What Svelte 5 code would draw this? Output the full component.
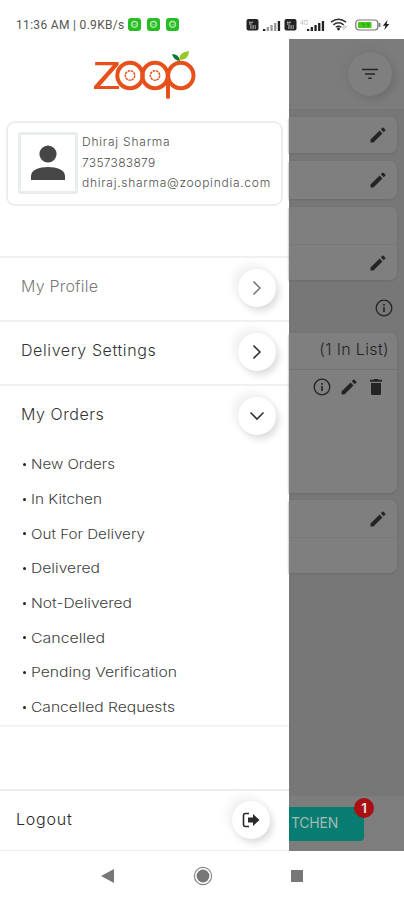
<script>
  const MENU = [
    { label: 'My Profile', muted: true, open: false },
    { label: 'Delivery Settings', muted: false, open: false },
    { label: 'My Orders', muted: false, open: true },
  ];

  const ORDER_LINKS = [
    { label: 'New Orders', width: 84 },
    { label: 'In Kitchen', width: 71 },
    { label: 'Out For Delivery', width: 114 },
    { label: 'Delivered', width: 69 },
    { label: 'Not-Delivered', width: 101 },
    { label: 'Cancelled', width: 74 },
    { label: 'Pending Verification', width: 146 },
    { label: 'Cancelled Requests', width: 144 },
  ];

  const user = {
    name: 'Dhiraj Sharma',
    phone: '7357383879',
    email: 'dhiraj.sharma@zoopindia.com',
  };

  const BARS = [2, 4, 6, 8, 10];
</script>

{#snippet pencil()}
  <svg class="icon" viewBox="0 0 24 24" width="20" height="20">
    <path d="M3 17.5V21h3.5L17.4 10.1l-3.5-3.5zM20.7 6.8a1 1 0 0 0 0-1.4l-2.1-2.1a1 1 0 0 0-1.4 0l-1.9 1.9 3.5 3.5z" />
  </svg>
{/snippet}

{#snippet info()}
  <svg class="icon" viewBox="0 0 20 20" width="20" height="20">
    <circle cx="10" cy="10" r="7.8" fill="none" stroke="currentColor" stroke-width="1.3" />
    <path d="M9.2 9h1.6v5H9.2zM9.2 6h1.6v1.7H9.2z" />
  </svg>
{/snippet}

{#snippet signal(faded)}
  <svg viewBox="0 0 19 12" width="19" height="12">
    {#each BARS as h, i}
      <rect x={1 + i * 3.7} y={12 - h} width="2.3" height={h} fill={i > 0 && i < 4 && faded ? '#999' : '#222'} />
    {/each}
  </svg>
{/snippet}

{#snippet volte()}
  <svg viewBox="0 0 13 12" width="13" height="12">
    <rect x=".5" width="12" height="11.5" rx="2" fill="#222" />
    <path d="M3 3.2h4M3 5h3M4 7h6M4 9h6" stroke="#ddd" stroke-width="1.1" stroke-dasharray="1.7 .6" fill="none" />
  </svg>
{/snippet}

<div class="phone">
  <div class="statusbar">
    <span class="clock">11:36 AM | 0.9KB/s</span>
    <div class="chats">
      {#each [1, 2, 3] as _}
        <svg viewBox="0 0 13 13" width="13" height="13">
          <rect width="13" height="13" rx="3" fill="#27bd24" />
          <circle cx="6.5" cy="6.3" r="3.2" fill="#6dd568" stroke="#b6efb2" />
          <path d="M5 5.5h3M5 7.3h3" stroke="#27a824" stroke-width=".8" />
        </svg>
      {/each}
    </div>
    <div class="radios">
      {@render volte()}
      {@render signal(true)}
      {@render volte()}
      <div class="sim">
        <span>4G</span>
        {@render signal(false)}
      </div>
      <svg class="wifi" viewBox="0 0 18 13" width="18" height="13">
        <path d="M1 4.2q7.5-6 15 0M3.3 6.8q5.2-4 10.4 0M5.8 9.2q2.7-2 5.4 0" fill="none" stroke="#333" stroke-width="1.6" />
        <circle cx="8.5" cy="11" r="1.4" fill="#222" />
        <path d="M13 11.5l4-3.5M12 10l3-2.5" stroke="#aaa" />
      </svg>
      <svg class="battery" viewBox="0 0 35 12" width="35" height="12">
        <rect x=".8" y="1" width="22" height="10" rx="3" fill="#fff" stroke="#777" stroke-width="1.2" />
        <rect x="3" y="3" width="13.5" height="6" rx="1" fill="#42c71a" />
        <path d="M7 5h2v2.5M12 5h2l-1 2.5" fill="none" stroke="#258c0b" stroke-width=".8" />
        <path d="M24.5 4v4" stroke="#777" stroke-width="1.8" />
        <path d="M32.5 1l-4.7 5.8h2.6L29.3 11l5-6h-2.6z" fill="#222" />
      </svg>
    </div>
  </div>

  <div class="main">
    <aside class="drawer">
      <div class="brand">
        <svg viewBox="86 39 116 68" width="116" height="68">
          <text x="91.5" y="88.6" textLength="30" lengthAdjust="spacingAndGlyphs">z</text>
          <g fill="none" stroke="#e8501b" stroke-width="4">
            <circle cx="130" cy="75.5" r="12.7" />
            <circle cx="155" cy="75.5" r="12.7" />
            <circle cx="180.8" cy="75.5" r="12.7" />
            <path d="M168 77v20" stroke-linecap="round" />
          </g>
          <g fill="none" stroke="#e8501b" stroke-width="1.5" stroke-dasharray="2.5 .7">
            <circle cx="130" cy="75.5" r="4.7" />
            <circle cx="155" cy="75.5" r="4.7" />
          </g>
          <path d="M180 61q-6 0-8-7 7 0 8 7z" fill="#08783a" />
          <path d="M179 60q0-8 10-9 0 9-10 9z" fill="#96c928" />
        </svg>
      </div>

      <div class="profile">
        <div class="avatar">
          <svg viewBox="0 0 36 36" width="36" height="36">
            <circle cx="18" cy="9" r="8.6" />
            <path d="M1 35v-4c0-6 8-9 17-9s17 3 17 9v4z" />
          </svg>
        </div>
        <div class="details">
          <span class="name">{user.name}</span>
          <span class="tel">{user.phone}</span>
          <span class="email">{user.email}</span>
        </div>
      </div>

      <nav>
        {#each MENU as item}
          <div class="row" class:muted={item.muted} class:open={item.open}>
            <span>{item.label}</span>
            <button type="button" class="knob" aria-label={item.label}>
              <svg viewBox="0 0 16 16" width="16" height="16" class:down={item.open}>
                <path d="M4.5 1.5L11 8l-6.5 6.5" />
              </svg>
            </button>
          </div>
        {/each}
        <ul>
          {#each ORDER_LINKS as link}
            <li>
              <i></i>
              <svg height="24" width={link.width + 2}>
                <text x="0" y="17" textLength={link.width} lengthAdjust="spacingAndGlyphs">{link.label}</text>
              </svg>
            </li>
          {/each}
        </ul>
      </nav>

      <div class="logout">
        <span>Logout</span>
        <button type="button" class="knob" aria-label="Logout">
          <svg viewBox="0 0 20 16" width="20" height="16">
            <path d="M8 1.5H4.5Q2.5 1.5 2.5 3.5v9q0 2 2 2H8" />
            <path class="solid" d="M7 5.5h5V2l6.5 6-6.5 6v-3.5H7z" />
          </svg>
        </button>
      </div>
    </aside>

    <section class="page">
      <header>
        <div class="filter">
          <svg viewBox="0 0 16 12" width="16" height="12">
            <path d="M0 1.5h16M3 6h10M6.3 10.3h3.4" stroke="currentColor" stroke-width="1.6" />
          </svg>
        </div>
      </header>

      <div class="cards">
        <div class="card small">{@render pencil()}</div>
        <div class="card small second">{@render pencil()}</div>
        <div class="card split">
          <div class="top"></div>
          <div class="bottom">{@render pencil()}</div>
        </div>
        <div class="hint">{@render info()}</div>
        <div class="card list">
          <div class="count"><span>(1 In List)</span></div>
          <div class="tools">
            {@render info()}
            {@render pencil()}
            <svg class="icon" viewBox="0 0 20 20" width="20" height="20">
              <path d="M4 2.8h3.5L8.5 2h3l1 .8H16v2H4zM5 6h10v10.5Q15 18 13.5 18h-7Q5 18 5 16.5z" />
            </svg>
          </div>
        </div>
        <div class="card split last">
          <div class="top">{@render pencil()}</div>
          <div class="bottom"></div>
        </div>
      </div>

      <footer>
        <div class="kitchen">
          TCHEN
          <span class="badge">1</span>
        </div>
      </footer>
    </section>
  </div>

  <div class="softkeys">
    <svg viewBox="0 0 14 16" width="14" height="16"><path d="M0 8l13-7v14z" /></svg>
    <svg viewBox="0 0 20 20" width="20" height="20">
      <circle cx="10" cy="10" r="8.6" fill="none" stroke="#888" stroke-width="1.2" />
      <circle cx="10" cy="10" r="6.4" />
    </svg>
    <svg viewBox="0 0 14 14" width="14" height="14"><rect x="1" y="1" width="12" height="12" /></svg>
  </div>
</div>

<style>
  :global(body) {
    margin: 0;
    background: #fff;
  }

  .phone {
    width: 404px;
    height: 900px;
    display: flex;
    flex-direction: column;
    overflow: hidden;
    background: #fff;
    color: #333;
    font-family: Inter, 'Open Sans', sans-serif;
    font-weight: 300;
  }

  svg {
    display: block;
    flex-shrink: 0;
  }

  .statusbar {
    height: 39px;
    display: flex;
    align-items: center;
    box-sizing: border-box;
    padding: 10px 14px 0 16px;
  }

  .clock {
    width: 112px;
    font-family: Roboto, sans-serif;
    font-weight: 400;
    font-size: 12px;
    letter-spacing: 0.32px;
    white-space: nowrap;
    color: #555;
  }

  .chats {
    display: flex;
    gap: 6px;
  }

  .radios {
    display: flex;
    align-items: center;
    gap: 3px;
    margin-left: auto;
  }

  .sim {
    display: flex;
  }

  .sim span {
    width: 6px;
    font-size: 6px;
    color: #999;
  }

  .wifi {
    margin-left: 2px;
  }

  .battery {
    margin-left: 4px;
  }

  .main {
    height: 812px;
    display: flex;
  }

  .drawer {
    width: 289px;
    display: flex;
    flex-direction: column;
    background: #fff;
  }

  .brand {
    height: 82px;
    box-sizing: border-box;
    padding-left: 86px;
  }

  .brand svg {
    overflow: visible;
  }

  .brand text {
    font: 400 50px 'Open Sans', sans-serif;
    fill: #e8501b;
  }

  .profile {
    display: flex;
    box-sizing: border-box;
    height: 85px;
    margin: 0 6px 50px;
    padding: 9px 9px 9px 10px;
    border: 2px solid #eceeee;
    border-radius: 9px;
  }

  .avatar {
    width: 60px;
    height: 62px;
    box-sizing: border-box;
    display: flex;
    align-items: center;
    justify-content: center;
    border: 3px solid #e9eded;
    border-radius: 2px;
    fill: #464646;
  }

  .details {
    display: flex;
    flex-direction: column;
    margin-left: 4px;
    font-size: 12px;
    line-height: 20.5px;
    white-space: nowrap;
    color: #505050;
  }

  .name {
    letter-spacing: 0.78px;
  }

  .tel {
    letter-spacing: 0.3px;
  }

  .email {
    letter-spacing: 0.73px;
  }

  .row {
    height: 64px;
    box-sizing: border-box;
    display: flex;
    align-items: center;
    justify-content: space-between;
    padding: 0 13px 6px 21px;
    border-top: 2px solid #f0f0f0;
    font-size: 16px;
    letter-spacing: 0.6px;
    color: #333;
  }

  .row.muted {
    letter-spacing: 0.2px;
    color: #7a7a7a;
  }

  .row.open {
    height: 62px;
    padding-bottom: 5px;
    letter-spacing: 0.55px;
  }

  .knob {
    width: 38px;
    height: 38px;
    margin: 4px 0 0;
    padding: 0;
    display: flex;
    align-items: center;
    justify-content: center;
    border: 0;
    border-radius: 50%;
    background: #fff;
    color: inherit;
    box-shadow: 3px 4px 7px rgba(0, 0, 0, 0.14), -5px -5px 10px rgba(0, 0, 0, 0.06);
  }

  .knob path {
    fill: none;
    stroke: currentColor;
    stroke-width: 1.6;
  }

  .knob .solid {
    fill: currentColor;
    stroke: none;
  }

  .down {
    transform: rotate(90deg);
  }

  ul {
    height: 281px;
    box-sizing: border-box;
    margin: 0;
    padding: 1px 0 0 23px;
    list-style: none;
    border-bottom: 2px solid #f3f3f3;
  }

  li {
    height: 34.7px;
    display: flex;
    align-items: center;
    gap: 5px;
  }

  li i {
    width: 3px;
    height: 3px;
    border-radius: 50%;
    background: #222;
  }

  li text {
    font-size: 13px;
    fill: #404040;
  }

  .logout {
    height: 62px;
    box-sizing: border-box;
    display: flex;
    align-items: center;
    justify-content: space-between;
    margin-top: auto;
    padding: 0 19px 3px 16px;
    border-top: 2px solid #ececec;
    border-bottom: 1px solid #eee;
    font-size: 16px;
    letter-spacing: 0.8px;
    color: #2a2a2a;
  }

  .logout .knob {
    margin-top: 2px;
  }

  .page {
    width: 115px;
    display: flex;
    flex-direction: column;
    background: #777;
    color: #242424;
  }

  .page header {
    height: 71px;
    box-sizing: border-box;
    padding: 13px 0 0 59px;
    background: #7c7c7c;
    border-bottom: 1px solid #747474;
  }

  .filter {
    width: 44px;
    height: 44px;
    display: flex;
    align-items: center;
    justify-content: center;
    border-radius: 50%;
    background: #7f7f7f;
    box-shadow: 3px 3px 7px #6e6e6e, -3px -3px 7px #787878;
  }

  .cards {
    padding: 7px 7px 0 0;
  }

  .card {
    box-sizing: border-box;
    margin-bottom: 8px;
    border-radius: 0 7px 7px 0;
    background: #7f7f7f;
    box-shadow: 0 1px 2px #6c6c6c;
  }

  .icon {
    fill: currentColor;
  }

  .small {
    height: 36px;
    display: flex;
    align-items: center;
    justify-content: flex-end;
    padding-right: 9px;
  }

  .small.second {
    height: 38px;
  }

  .split {
    height: 73px;
  }

  .split .top,
  .split .bottom {
    box-sizing: border-box;
    display: flex;
    align-items: center;
    justify-content: flex-end;
    padding-right: 9px;
    height: 36px;
  }

  .split .top {
    height: 38px;
    border-bottom: 1px solid #797979;
  }

  .hint {
    height: 45px;
    box-sizing: border-box;
    display: flex;
    align-items: center;
    justify-content: flex-end;
    padding: 0 3px 6px 0;
  }

  .list {
    height: 160px;
    margin-bottom: 7px;
  }

  .count {
    height: 37px;
    box-sizing: border-box;
    padding: 6px 8px 0 0;
    text-align: right;
    font-size: 16px;
    letter-spacing: 0.35px;
    white-space: nowrap;
    border-bottom: 1px solid #737373;
  }

  .tools {
    display: flex;
    justify-content: flex-end;
    gap: 7px;
    padding: 7px 11px 0 0;
  }

  footer {
    height: 55px;
    box-sizing: border-box;
    margin-top: auto;
    padding-top: 11px;
    background: #7d7d7d;
  }

  .kitchen {
    position: relative;
    width: 75px;
    height: 34px;
    box-sizing: border-box;
    padding-left: 2px;
    border-radius: 0 4px 4px 0;
    background: #077c70;
    color: #a5b9b5;
    font-size: 14px;
    font-weight: 400;
    letter-spacing: -0.25px;
    line-height: 32px;
  }

  .badge {
    position: absolute;
    top: -9px;
    right: -10px;
    width: 20px;
    height: 20px;
    border-radius: 50%;
    background: #a90f13;
    color: #ddd;
    font-size: 13px;
    font-weight: 700;
    line-height: 20px;
    text-align: center;
  }

  .softkeys {
    height: 49px;
    display: flex;
    align-items: center;
    padding-left: 101px;
    fill: #777;
  }

  .softkeys svg:nth-child(2) {
    margin-left: 78px;
  }

  .softkeys svg:nth-child(3) {
    margin-left: 77px;
  }
</style>
